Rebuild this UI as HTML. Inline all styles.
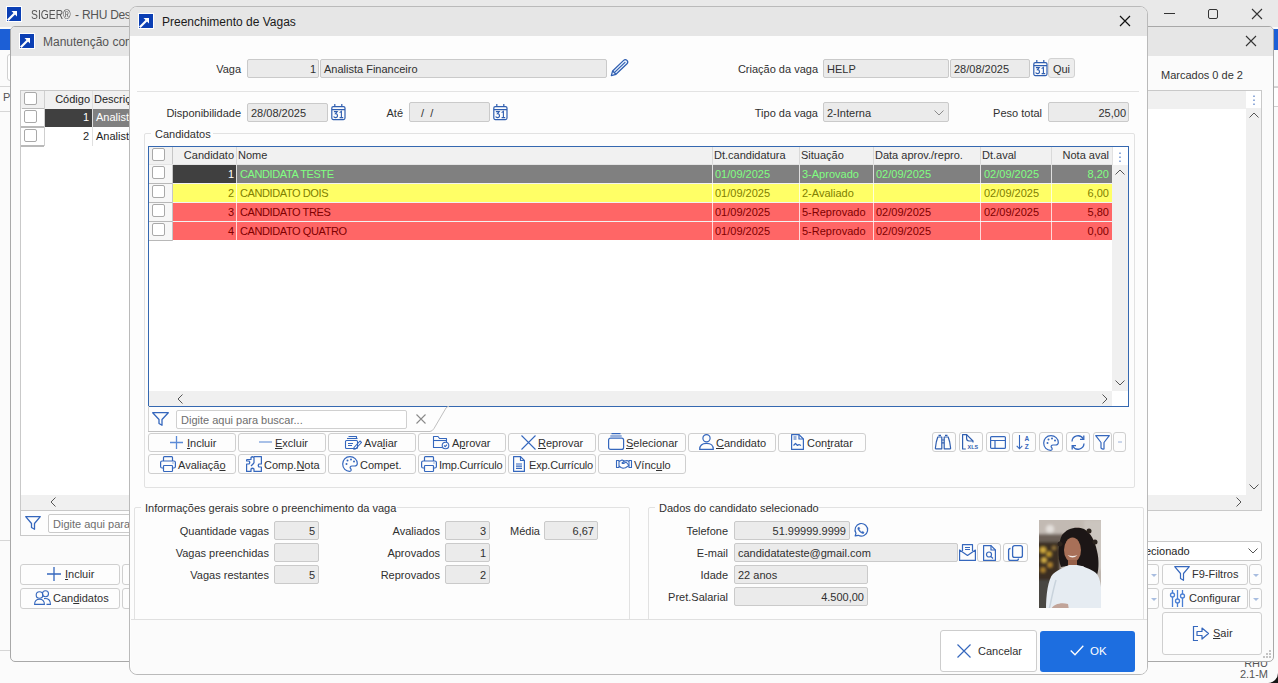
<!DOCTYPE html>
<html><head><meta charset="utf-8">
<style>
*{box-sizing:border-box;margin:0;padding:0}
html,body{width:1278px;height:683px;overflow:hidden;background:#f0f0f0;font-family:"Liberation Sans",sans-serif;font-size:11px;color:#303030;position:relative}
.a{position:absolute}
.t{position:absolute;white-space:nowrap;line-height:13px;font-size:11px}
.r{text-align:right}
.box{position:absolute;background:#ebebeb;border:1px solid #cacaca;border-radius:2px;font-size:11px;line-height:17px;padding-top:1px;white-space:nowrap;overflow:hidden;color:#303030}
.btn{position:absolute;background:#fdfdfd;border:1px solid #cfcfcf;border-radius:3px;font-size:11px;line-height:17px;white-space:nowrap;color:#303030}
.hl{position:absolute;height:1px}
.vl{position:absolute;width:1px}
.ico{position:absolute}
svg{position:absolute;overflow:visible}
.cb{position:absolute;width:13px;height:13px;border:1px solid #a9a9a9;border-radius:2px;background:#fff}
u{text-decoration:underline;text-underline-offset:1px}
.rw .t,.bt .t{top:0}
.nm{letter-spacing:-0.4px}
</style></head><body>

<!-- ===== MAIN SIGER WINDOW ===== -->
<div class="a" style="left:0;top:0;width:1278px;height:683px;background:#e9e9e9"></div>
<div class="a" style="left:0;top:27px;width:1278px;height:656px;background:#fbfbfb"></div>
<div class="a" style="left:7px;top:7px;width:14px;height:14px;background:#0b3fb4;box-shadow:0 0 0 1px #fff"></div>
<svg style="left:7px;top:7px" width="14" height="14"><path d="M0.8 13.2 L7.5 6.5" stroke="#fff" stroke-width="2.2"/><path d="M4.5 4 H10 V9.5 Z" fill="#fff"/></svg>
<div class="t" style="left:31px;top:9px;font-size:12px;color:#555;transform:scaleX(0.86);transform-origin:0 0">SIGER®</div><div class="t" style="left:75px;top:9px;font-size:12px;color:#555">-</div><div class="t" style="left:82px;top:9px;font-size:12px;color:#555;letter-spacing:-0.3px">RHU Desk</div>
<div class="hl" style="left:1164px;top:13px;width:11px;background:#333"></div>
<div class="a" style="left:1208px;top:9px;width:10px;height:10px;border:1px solid #333;border-radius:2px"></div>
<svg style="left:1252px;top:9px" width="10" height="10"><path d="M0 0 L10 10 M10 0 L0 10" stroke="#333" stroke-width="1.1"/></svg>
<div class="a" style="left:0;top:29px;width:12px;height:21px;background:#1c5fd6"></div>
<div class="a" style="left:1272px;top:29px;width:6px;height:21px;background:#1c5fd6"></div>
<div class="hl" style="left:0;top:86px;width:11px;background:#d6d6d6"></div>
<div class="hl" style="left:0;top:111px;width:11px;background:#d6d6d6"></div>
<div class="t" style="left:3px;top:91px;color:#555">P</div>
<div class="a" style="left:7px;top:54px;width:8px;height:27px;border:1px solid #d0d0d0;border-radius:3px;background:#fff"></div>
<div class="hl" style="left:0;top:540px;width:11px;background:#d6d6d6"></div>
<div class="hl" style="left:0;top:650px;width:11px;background:#d6d6d6"></div>
<div class="hl" style="left:1272px;top:86px;width:6px;background:#d6d6d6"></div>
<div class="a" style="left:1270px;top:87px;width:12px;height:20px;border:1px solid #d0d0d0;border-radius:3px;background:#fff"></div>
<div class="t r" style="left:1230px;top:657px;width:38px;color:#555">RHU</div>
<div class="t r" style="left:1230px;top:668px;width:38px;color:#555">2.1-M</div>

<!-- ===== CHILD WINDOW Manutencao ===== -->
<div class="a" style="left:10px;top:26px;width:1264px;height:636px;border:1px solid #a8a8a8;border-radius:5px;background:#fbfbfb;overflow:hidden">
  <div class="a" style="left:0;top:0;width:1262px;height:29px;background:#e6e6e6"></div>
</div>
<div class="a" style="left:20px;top:34px;width:14px;height:14px;background:#0b3fb4;box-shadow:0 0 0 1px #fff"></div>
<svg style="left:20px;top:34px" width="14" height="14"><path d="M0.8 13.2 L7.5 6.5" stroke="#fff" stroke-width="2.2"/><path d="M4.5 4 H10 V9.5 Z" fill="#fff"/></svg>
<div class="t" style="left:43px;top:36px;font-size:12px;color:#555">Manutenção com</div>
<svg style="left:1246px;top:36px" width="10" height="10"><path d="M0 0 L10 10 M10 0 L0 10" stroke="#333" stroke-width="1.1"/></svg>
<div class="t" style="left:1161px;top:69px;color:#333">Marcados 0 de 2</div>
<!-- grid -->
<div class="a" style="left:20px;top:90px;width:1242px;height:421px;border:1px solid #c9c9c9;background:#fff"></div>
<div class="a" style="left:20px;top:510px;width:121px;height:26px;border:1px solid #c9c9c9;border-top:none;background:#fdfdfd"></div>
<div class="a" style="left:21px;top:91px;width:1225px;height:18px;background:#f0f0f0"></div>
<div class="vl" style="left:44px;top:91px;height:55px;background:#cfcfcf"></div>
<div class="vl" style="left:92px;top:91px;height:55px;background:#e0e0e0"></div>
<div class="cb" style="left:24px;top:92px"></div>
<div class="t r" style="left:44px;top:93px;width:46px;color:#1e1e1e">Código</div>
<div class="t" style="left:94px;top:93px;color:#1e1e1e">Descrição</div>
<div class="hl" style="left:22px;top:108px;width:22px;background:#b9b9b9"></div>
<div class="a" style="left:45px;top:109px;width:47px;height:18px;background:#404040"></div>
<div class="a" style="left:93px;top:109px;width:40px;height:18px;background:#808080"></div>
<div class="t r" style="left:45px;top:111px;width:44px;color:#fff">1</div>
<div class="t" style="left:96px;top:111px;color:#fff">Analista Financeiro</div>
<div class="cb" style="left:24px;top:110px"></div>
<div class="hl" style="left:21px;top:126px;width:23px;height:2px;background:#b9b9b9"></div>
<div class="cb" style="left:24px;top:129px"></div>
<div class="t r" style="left:45px;top:130px;width:44px;color:#1e1e1e">2</div>
<div class="t" style="left:96px;top:130px;color:#1e1e1e">Analista Contábil</div>
<div class="hl" style="left:21px;top:145px;width:23px;height:2px;background:#b9b9b9"></div>
<!-- right scrollbar -->
<div class="a" style="left:1246px;top:108px;width:15px;height:387px;background:#f0f0f0"></div>
<svg style="left:1249px;top:112px" width="10" height="6"><path d="M0.5 5.5 L5 1 L9.5 5.5" stroke="#555" fill="none"/></svg>
<svg style="left:1249px;top:484px" width="10" height="6"><path d="M0.5 0.5 L5 5 L9.5 0.5" stroke="#555" fill="none"/></svg>
<svg style="left:1253px;top:95px" width="2" height="11"><path d="M1 0.5v1.5M1 4.5v1.5M1 8.5v1.5" stroke="#4d78c4" stroke-width="1.2"/></svg>
<div class="a" style="left:21px;top:495px;width:1240px;height:15px;background:#f0f0f0"></div>
<div class="hl" style="left:21px;top:510px;width:1240px;background:#c9c9c9"></div>
<svg style="left:50px;top:497px" width="6" height="10"><path d="M5.5 0.5 L1 5 L5.5 9.5" stroke="#555" fill="none"/></svg>
<svg style="left:1236px;top:497px" width="6" height="10"><path d="M0.5 0.5 L5 5 L0.5 9.5" stroke="#555" fill="none"/></svg>
<svg style="left:25px;top:516px" width="16" height="14"><path d="M0.7 0.7 H15.3 L9.5 7.5 V13.3 L6.5 11.5 V7.5 Z" stroke="#3567bd" stroke-width="1.3" fill="none" stroke-linejoin="round"/></svg>
<div class="box" style="left:48px;top:514px;width:90px;height:19px;background:#fff;color:#6e6e6e;padding-left:4px">Digite aqui para buscar...</div>
<!-- bottom buttons -->
<div class="btn" style="left:20px;top:564px;width:100px;height:21px;line-height:19px;padding-left:44px"><u>I</u>ncluir</div>
<svg style="left:47px;top:567px" width="14" height="14"><path d="M7 0v14M0 7h14" stroke="#3567bd" stroke-width="1.3"/></svg>
<div class="btn" style="left:122px;top:564px;width:20px;height:21px"></div>
<div class="btn" style="left:20px;top:588px;width:100px;height:21px;line-height:19px;padding-left:32px">Can<u>d</u>idatos</div>
<svg style="left:34px;top:590px" width="17" height="15"><g stroke="#3567bd" stroke-width="1.1" fill="none"><circle cx="11.5" cy="3.8" r="3"/><path d="M10 8.6 C14.5 8.3 16.5 10 16.5 14.4 H12.5"/><circle cx="5.5" cy="5" r="3.3"/><path d="M0.6 14.4 C0.6 10.5 2.5 9.3 5.5 9.3 C8.5 9.3 10.4 10.5 10.4 14.4 Z"/></g></svg>
<div class="btn" style="left:122px;top:588px;width:20px;height:21px"></div>
<div class="a" style="left:1140px;top:541px;width:122px;height:20px;border:1px solid #c9c9c9;border-radius:3px;background:#fff"></div>
<div class="t" style="left:1145px;top:545px;color:#1e1e1e">ecionado</div>
<svg style="left:1248px;top:548px" width="10" height="6"><path d="M0.5 0.5 L5 5 L9.5 0.5" stroke="#555" fill="none"/></svg>
<div class="btn" style="left:1145px;top:564px;width:14px;height:21px"></div>
<div class="btn" style="left:1162px;top:564px;width:86px;height:21px;line-height:19px;padding-left:29px">F9-Filtros</div>
<svg style="left:1174px;top:566px" width="16" height="15"><path d="M0.7 0.7 H15.3 L9.5 7.5 V14.3 L6.5 12.5 V7.5 Z" stroke="#3567bd" stroke-width="1.2" fill="none" stroke-linejoin="round"/></svg>
<div class="btn" style="left:1249px;top:564px;width:13px;height:21px"></div>
<div class="btn" style="left:1145px;top:588px;width:14px;height:21px"></div>
<div class="btn" style="left:1162px;top:588px;width:86px;height:21px;line-height:19px;padding-left:26px">Configurar</div>
<svg style="left:1170px;top:590px" width="15" height="17"><g stroke="#4a7fd4" stroke-width="1.3" fill="none"><path d="M2.5 0v17M7.5 0v17M12.5 0v17"/><circle cx="2.5" cy="5" r="2" fill="#fdfdfd"/><circle cx="7.5" cy="11" r="2" fill="#fdfdfd"/><circle cx="12.5" cy="6" r="2" fill="#fdfdfd"/></g></svg>
<div class="btn" style="left:1249px;top:588px;width:13px;height:21px"></div>
<svg style="left:1151px;top:574px" width="6" height="3"><path d="M0 0 H6 L3 3 Z" fill="#a8bde0"/></svg>
<svg style="left:1253px;top:574px" width="6" height="3"><path d="M0 0 H6 L3 3 Z" fill="#a8bde0"/></svg>
<svg style="left:1151px;top:598px" width="6" height="3"><path d="M0 0 H6 L3 3 Z" fill="#a8bde0"/></svg>
<svg style="left:1253px;top:598px" width="6" height="3"><path d="M0 0 H6 L3 3 Z" fill="#a8bde0"/></svg>
<div class="btn" style="left:1162px;top:612px;width:100px;height:43px;line-height:41px;padding-left:50px"><u>S</u>air</div>
<svg style="left:1192px;top:626px" width="18" height="15"><path d="M6 0.5 H1.5 V14.5 H6" stroke="#3567bd" fill="none" stroke-width="1.2"/><path d="M5 5.5 H10 V2 L16.5 7.5 L10 13 V9.5 H5 Z" stroke="#3567bd" fill="none" stroke-width="1.2" stroke-linejoin="round"/></svg>

<!-- DIALOG placeholder -->
<svg style="left:1263px;top:650px" width="9" height="9"><g fill="#c4c4c4"><rect x="6" y="0" width="2" height="2"/><rect x="3" y="3" width="2" height="2"/><rect x="6" y="3" width="2" height="2"/><rect x="0" y="6" width="2" height="2"/><rect x="3" y="6" width="2" height="2"/><rect x="6" y="6" width="2" height="2"/></g></svg>
<svg style="left:1268px;top:673px" width="10" height="10"><path d="M10 0 V10 H0 A10 10 0 0 0 10 0 Z" fill="#151515"/></svg>
<!--DIALOG START-->
<!-- ===== DIALOG Preenchimento de Vagas ===== -->
<div class="a" style="left:129px;top:6px;width:1019px;height:669px;border:1px solid #bababa;border-radius:8px;background:#fdfdfd;overflow:hidden">
  <div class="a" style="left:0;top:0;width:1017px;height:29px;background:#e6e6e6"></div>
</div>
<div class="a" style="left:139px;top:14px;width:14px;height:14px;background:#0b3fb4;box-shadow:0 0 0 1px #fff"></div>
<svg style="left:139px;top:14px" width="14" height="14"><path d="M0.8 13.2 L7.5 6.5" stroke="#fff" stroke-width="2.2"/><path d="M4.5 4 H10 V9.5 Z" fill="#fff"/></svg>
<div class="t" style="left:162px;top:16px;font-size:12px;color:#1a1a1a">Preenchimento de Vagas</div>
<svg style="left:1120px;top:16px" width="10" height="10"><path d="M0 0 L10 10 M10 0 L0 10" stroke="#111" stroke-width="1.2"/></svg>

<!-- row Vaga -->
<div class="t r" style="left:180px;top:63px;width:61px">Vaga</div>
<div class="box r" style="left:247px;top:59px;width:72px;height:19px;padding-right:2px">1</div>
<div class="box" style="left:320px;top:59px;width:287px;height:19px;padding-left:3px">Analista Financeiro</div>
<svg style="left:610px;top:59px" width="19" height="18"><g stroke="#2f5eb0" stroke-width="1.2" fill="none" stroke-linejoin="round"><path d="M1.3 16.6 L2.6 12 L13.6 1.4 Q15.3 -0.2 17 1.4 Q18.6 3.1 17 4.8 L6 15.3 Z" fill="#eaf3ff"/><path d="M4.3 13.6 L15.3 3.1"/><path d="M2.6 12 L6 15.3"/></g></svg>
<div class="t r" style="left:700px;top:63px;width:118px">Criação da vaga</div>
<div class="box" style="left:823px;top:59px;width:126px;height:19px;padding-left:3px">HELP</div>
<div class="box" style="left:950px;top:59px;width:80px;height:19px;padding-left:3px">28/08/2025</div>
<svg style="left:1033px;top:60px" width="15" height="16"><g stroke="#2f5eb0" stroke-width="1.2" fill="none"><rect x="0.8" y="2.6" width="13.2" height="13" rx="1.5"/><path d="M0.8 5.6 H14 M3.8 0 V2.6 M10.8 0 V2.6"/><path d="M2.9 7.6 H6.2 L4.4 9.8 Q6.5 9.8 6.5 11.7 Q6.5 13.6 4.5 13.6 Q3.1 13.6 2.6 12.6" stroke-width="1.1"/><path d="M8.6 8.6 L10.4 7.4 V13.6 M8.6 13.6 H12.2" stroke-width="1.1"/></g></svg>
<div class="btn" style="left:1048px;top:58px;width:27px;height:20px;text-align:center;background:#ededed;border-color:#d2d2d2;padding-top:2px">Qui</div>
<div class="hl" style="left:137px;top:91px;width:1002px;background:#e3e3e3"></div>

<!-- row Disponibilidade -->
<div class="t r" style="left:150px;top:107px;width:91px">Disponibilidade</div>
<div class="box" style="left:247px;top:103px;width:81px;height:19px;padding-left:3px">28/08/2025</div>
<svg style="left:331px;top:104px" width="15" height="16"><g stroke="#2f5eb0" stroke-width="1.2" fill="none"><rect x="0.8" y="2.6" width="13.2" height="13" rx="1.5"/><path d="M0.8 5.6 H14 M3.8 0 V2.6 M10.8 0 V2.6"/><path d="M2.9 7.6 H6.2 L4.4 9.8 Q6.5 9.8 6.5 11.7 Q6.5 13.6 4.5 13.6 Q3.1 13.6 2.6 12.6" stroke-width="1.1"/><path d="M8.6 8.6 L10.4 7.4 V13.6 M8.6 13.6 H12.2" stroke-width="1.1"/></g></svg>
<div class="t r" style="left:370px;top:107px;width:33px">Até</div>
<div class="box" style="left:409px;top:102px;width:81px;height:20px;padding-left:8px;line-height:18px">&nbsp;/ &nbsp;/</div>
<svg style="left:493px;top:104px" width="15" height="16"><g stroke="#2f5eb0" stroke-width="1.2" fill="none"><rect x="0.8" y="2.6" width="13.2" height="13" rx="1.5"/><path d="M0.8 5.6 H14 M3.8 0 V2.6 M10.8 0 V2.6"/><path d="M2.9 7.6 H6.2 L4.4 9.8 Q6.5 9.8 6.5 11.7 Q6.5 13.6 4.5 13.6 Q3.1 13.6 2.6 12.6" stroke-width="1.1"/><path d="M8.6 8.6 L10.4 7.4 V13.6 M8.6 13.6 H12.2" stroke-width="1.1"/></g></svg>
<div class="t r" style="left:700px;top:107px;width:118px">Tipo da vaga</div>
<div class="box" style="left:823px;top:102px;width:126px;height:20px;padding-left:3px;padding-top:2px">2-Interna</div>
<svg style="left:934px;top:110px" width="10" height="6"><path d="M0.5 0.5 L5 5 L9.5 0.5" stroke="#8a8a8a" fill="none"/></svg>
<div class="t r" style="left:960px;top:107px;width:82px">Peso total</div>
<div class="box r" style="left:1048px;top:102px;width:81px;height:20px;padding-right:2px;line-height:18px">25,00</div>

<!-- Candidatos group -->
<div class="a" style="left:144px;top:133px;width:991px;height:355px;border:1px solid #e2e2e2;border-radius:2px"></div>
<div class="a" style="left:151px;top:127px;width:62px;height:12px;background:#fdfdfd"></div>
<div class="t" style="left:155px;top:128px">Candidatos</div>
<!-- grid -->
<div class="a" style="left:148px;top:146px;width:981px;height:261px;border:1px solid #3568b0;background:#fff"></div>
<div class="a" style="left:149px;top:147px;width:963px;height:18px;background:#f1f1f1"></div>
<div class="a" style="left:1112px;top:147px;width:16px;height:18px;background:#fff"></div>
<div class="a" style="left:149px;top:165px;width:23px;height:76px;background:#f7f7f7"></div>
<div class="vl" style="left:172px;top:147px;height:94px;background:#c6c6c6"></div>
<div class="vl" style="left:236px;top:147px;height:18px;background:#d9d9d9"></div>
<div class="vl" style="left:712px;top:147px;height:18px;background:#d9d9d9"></div>
<div class="vl" style="left:799px;top:147px;height:18px;background:#d9d9d9"></div>
<div class="vl" style="left:873px;top:147px;height:18px;background:#d9d9d9"></div>
<div class="vl" style="left:980px;top:147px;height:18px;background:#d9d9d9"></div>
<div class="vl" style="left:1051px;top:147px;height:18px;background:#d9d9d9"></div>
<div class="hl" style="left:149px;top:164px;width:963px;background:#e4e4e4"></div>
<div class="cb" style="left:152px;top:148px"></div>
<div class="t r" style="left:173px;top:149px;width:61px">Candidato</div>
<div class="t" style="left:238px;top:149px">Nome</div>
<div class="t" style="left:714px;top:149px">Dt.candidatura</div>
<div class="t" style="left:801px;top:149px">Situação</div>
<div class="t" style="left:875px;top:149px">Data aprov./repro.</div>
<div class="t" style="left:982px;top:149px">Dt.aval</div>
<div class="t r" style="left:1052px;top:149px;width:57px">Nota aval</div>
<svg style="left:1119px;top:152px" width="2" height="11"><path d="M1 0.5v1.5M1 4.5v1.5M1 8.5v1.5" stroke="#4d78c4" stroke-width="1.2"/></svg>
<div class="vl" style="left:1112px;top:147px;height:18px;background:#e2e2e2"></div>
<!-- rows -->
<div class="a" style="left:173px;top:165px;width:939px;height:18px;background:#808080"></div>
<div class="a" style="left:173px;top:165px;width:63px;height:18px;background:#404040"></div>
<div class="a" style="left:173px;top:184px;width:939px;height:18px;background:#ffff66"></div>
<div class="a" style="left:173px;top:203px;width:939px;height:18px;background:#ff6666"></div>
<div class="a" style="left:173px;top:222px;width:939px;height:18px;background:#ff6666"></div>
<div class="hl" style="left:173px;top:183px;width:939px;background:#f2f2f2"></div>
<div class="hl" style="left:173px;top:202px;width:939px;background:#f2f2f2"></div>
<div class="hl" style="left:173px;top:221px;width:939px;background:#f2f2f2"></div>
<div class="hl" style="left:149px;top:183px;width:23px;background:#b8b8b8"></div>
<div class="hl" style="left:149px;top:202px;width:23px;background:#b8b8b8"></div>
<div class="hl" style="left:149px;top:221px;width:23px;background:#b8b8b8"></div>
<div class="hl" style="left:149px;top:240px;width:23px;background:#b8b8b8"></div>
<div class="vl" style="left:236px;top:165px;height:75px;background:rgba(255,255,255,0.75)"></div>
<div class="vl" style="left:712px;top:165px;height:75px;background:rgba(255,255,255,0.75)"></div>
<div class="vl" style="left:799px;top:165px;height:75px;background:rgba(255,255,255,0.75)"></div>
<div class="vl" style="left:873px;top:165px;height:75px;background:rgba(255,255,255,0.75)"></div>
<div class="vl" style="left:980px;top:165px;height:75px;background:rgba(255,255,255,0.75)"></div>
<div class="vl" style="left:1051px;top:165px;height:75px;background:rgba(255,255,255,0.75)"></div>
<div class="cb" style="left:152px;top:166px"></div>
<div class="cb" style="left:152px;top:185px"></div>
<div class="cb" style="left:152px;top:204px"></div>
<div class="cb" style="left:152px;top:223px"></div>
<div class="rw" style="position:absolute;left:0;top:168px;color:#80ff80">
 <div class="t r" style="left:173px;width:61px;color:#fff">1</div>
 <div class="t nm" style="left:240px">CANDIDATA TESTE</div>
 <div class="t" style="left:715px">01/09/2025</div>
 <div class="t" style="left:802px">3-Aprovado</div>
 <div class="t" style="left:876px">02/09/2025</div>
 <div class="t" style="left:984px">02/09/2025</div>
 <div class="t r" style="left:1052px;width:57px">8,20</div>
</div>
<div class="rw" style="position:absolute;left:0;top:187px;color:#808000">
 <div class="t r" style="left:173px;width:61px">2</div>
 <div class="t nm" style="left:240px">CANDIDATO DOIS</div>
 <div class="t" style="left:715px">01/09/2025</div>
 <div class="t" style="left:802px">2-Avaliado</div>
 <div class="t" style="left:984px">02/09/2025</div>
 <div class="t r" style="left:1052px;width:57px">6,00</div>
</div>
<div class="rw" style="position:absolute;left:0;top:206px;color:#800000">
 <div class="t r" style="left:173px;width:61px">3</div>
 <div class="t nm" style="left:240px">CANDIDATO TRES</div>
 <div class="t" style="left:715px">01/09/2025</div>
 <div class="t" style="left:802px">5-Reprovado</div>
 <div class="t" style="left:876px">02/09/2025</div>
 <div class="t" style="left:984px">02/09/2025</div>
 <div class="t r" style="left:1052px;width:57px">5,80</div>
</div>
<div class="rw" style="position:absolute;left:0;top:225px;color:#800000">
 <div class="t r" style="left:173px;width:61px">4</div>
 <div class="t nm" style="left:240px">CANDIDATO QUATRO</div>
 <div class="t" style="left:715px">01/09/2025</div>
 <div class="t" style="left:802px">5-Reprovado</div>
 <div class="t" style="left:876px">02/09/2025</div>
 <div class="t r" style="left:1052px;width:57px">0,00</div>
</div>
<!-- scrollbars -->
<div class="a" style="left:1112px;top:165px;width:16px;height:226px;background:#f0f0f0"></div>
<svg style="left:1115px;top:169px" width="10" height="6"><path d="M0.5 5.5 L5 1 L9.5 5.5" stroke="#555" fill="none"/></svg>
<svg style="left:1115px;top:380px" width="10" height="6"><path d="M0.5 0.5 L5 5 L9.5 0.5" stroke="#555" fill="none"/></svg>
<div class="a" style="left:149px;top:391px;width:963px;height:15px;background:#f0f0f0"></div>
<svg style="left:177px;top:394px" width="6" height="10"><path d="M5.5 0.5 L1 5 L5.5 9.5" stroke="#555" fill="none"/></svg>
<svg style="left:1102px;top:394px" width="6" height="10"><path d="M0.5 0.5 L5 5 L0.5 9.5" stroke="#555" fill="none"/></svg>
<!-- filter row -->
<svg style="left:152px;top:412px" width="17" height="14"><path d="M0.7 0.7 H16.3 L10 7.5 V13.3 L7 11.5 V7.5 Z" stroke="#3567bd" stroke-width="1.3" fill="none" stroke-linejoin="round"/></svg>
<div class="box" style="left:176px;top:410px;width:231px;height:19px;background:#fff;color:#6e6e6e;padding-left:4px;border-color:#d0d0d0">Digite aqui para buscar...</div>
<svg style="left:416px;top:414px" width="10" height="10"><path d="M0.5 0.5 L9.5 9.5 M9.5 0.5 L0.5 9.5" stroke="#8a8a8a" stroke-width="1.1"/></svg>
<div class="vl" style="left:148px;top:406px;height:26px;background:#d4d4d4"></div>
<svg style="left:147px;top:403px" width="300" height="30"><path d="M1 28.5 H283 Q285 28.5 287 25.5 L299 5 Q300 3.5 302 3.5" stroke="#c0c0c0" fill="none"/></svg>
<!-- button rows -->
<div class="btn" style="left:148px;top:433px;width:88px;height:19px"></div>
<div class="btn" style="left:238px;top:433px;width:88px;height:19px"></div>
<div class="btn" style="left:328px;top:433px;width:88px;height:19px"></div>
<div class="btn" style="left:418px;top:433px;width:88px;height:19px"></div>
<div class="btn" style="left:508px;top:433px;width:88px;height:19px"></div>
<div class="btn" style="left:598px;top:433px;width:88px;height:19px"></div>
<div class="btn" style="left:688px;top:433px;width:88px;height:19px"></div>
<div class="btn" style="left:778px;top:433px;width:88px;height:19px"></div>
<div class="btn" style="left:148px;top:454px;width:88px;height:20px"></div>
<div class="btn" style="left:238px;top:454px;width:88px;height:20px"></div>
<div class="btn" style="left:328px;top:454px;width:88px;height:20px"></div>
<div class="btn" style="left:418px;top:454px;width:88px;height:20px"></div>
<div class="btn" style="left:508px;top:454px;width:88px;height:20px"></div>
<div class="btn" style="left:598px;top:454px;width:88px;height:20px"></div>
<div class="bt" style="position:absolute;left:0;top:437px">
 <div class="t" style="left:187px"><u>I</u>ncluir</div>
 <div class="t" style="left:275px"><u>E</u>xcluir</div>
 <div class="t" style="left:364px">Ava<u>l</u>iar</div>
 <div class="t" style="left:452px">A<u>p</u>rovar</div>
 <div class="t" style="left:538px"><u>R</u>eprovar</div>
 <div class="t" style="left:626px"><u>S</u>elecionar</div>
 <div class="t" style="left:716px"><u>C</u>andidato</div>
 <div class="t" style="left:807px">Con<u>t</u>ratar</div>
</div>
<div class="bt" style="position:absolute;left:0;top:459px">
 <div class="t" style="left:178px">Avaliaçã<u>o</u></div>
 <div class="t" style="left:264px">Comp.<u>N</u>ota</div>
 <div class="t" style="left:360px">Compet.</div>
 <div class="t" style="left:439px;letter-spacing:-0.2px">Imp.Currículo</div>
 <div class="t" style="left:529px;letter-spacing:-0.2px">Exp.Currículo</div>
 <div class="t" style="left:634px">Vínc<u>u</u>lo</div>
</div>
<!-- icons row1 -->
<svg style="left:170px;top:436px" width="13" height="13"><path d="M6.5 0v13M0 6.5h13" stroke="#5b8ad6" stroke-width="1.3"/></svg>
<svg style="left:259px;top:436px" width="13" height="13"><path d="M0 6h13" stroke="#7a9fdc" stroke-width="1.3"/></svg>
<svg style="left:345px;top:436px" width="17" height="13"><g stroke="#3567bd" stroke-width="1.1" fill="none" stroke-linejoin="round"><path d="M3.5 0.5 H11.5 V3"/><path d="M2 2.5 H12.5"/><rect x="0.5" y="4.5" width="12" height="8" rx="1"/><path d="M3 7.5h5M3 9.5h4"/><path d="M9 11.5 L15 5 L16.5 6.5 L10.5 13 L8.7 13.2 Z"/></g></svg>
<svg style="left:433px;top:436px" width="17" height="13"><g stroke="#3567bd" stroke-width="1.1" fill="none" stroke-linejoin="round"><path d="M9 11.5 H0.5 V0.5 H5 L6.5 2.5 H13.5 V6"/><path d="M0.5 4.5 H13.5"/><circle cx="12.5" cy="9.5" r="3.3"/><path d="M11 9.5 L12.2 10.7 L14 8.6"/></g></svg>
<svg style="left:521px;top:435px" width="15" height="15"><path d="M0.5 0.5 L14.5 14.5 M14.5 0.5 L0.5 14.5" stroke="#3567bd" stroke-width="1.1"/></svg>
<svg style="left:608px;top:433px" width="17" height="17"><g stroke="#3567bd" stroke-width="1.2" fill="none"><rect x="0.6" y="5.2" width="15" height="11.2" rx="2"/><path d="M3.5 0.6h9M2.3 3h11.4"/></g></svg>
<svg style="left:699px;top:434px" width="15" height="16"><g stroke="#3567bd" stroke-width="1.2" fill="none"><circle cx="7.5" cy="4.2" r="3.6"/><path d="M0.7 15.4 C0.7 10.5 3.5 9.3 7.5 9.3 C11.5 9.3 14.3 10.5 14.3 15.4 Z"/></g></svg>
<svg style="left:791px;top:434px" width="13" height="16"><g stroke="#3567bd" stroke-width="1.2" fill="none" stroke-linejoin="round"><path d="M0.6 0.6 H8 L12.4 5 V15.4 H0.6 Z"/><path d="M8 0.6 V5 H12.4"/><path d="M2.5 3h3M2.5 5h3M2.5 11.5 L4.5 9.5 L6.5 11.5 L8 10.5 L10 11.5"/></g></svg>
<!-- icons row2 -->
<svg style="left:160px;top:456px" width="16" height="16"><g stroke="#3567bd" stroke-width="1.2" fill="none" stroke-linejoin="round"><path d="M3.5 5 V1.5 Q3.5 0.6 4.4 0.6 H11.6 Q12.5 0.6 12.5 1.5 V5"/><rect x="0.6" y="5" width="14.8" height="7" rx="1.5"/><rect x="3.5" y="9.5" width="9" height="6" rx="0.8" fill="#fdfdfd"/><path d="M12.5 7h1"/></g></svg>
<svg style="left:246px;top:456px" width="16" height="16"><g stroke="#3567bd" stroke-width="1.2" fill="none" stroke-linejoin="round"><path d="M0.6 3.5 H5 V1.5 Q6.5 0 8 1.5 V3.5 H8 V7"/><path d="M8 0.6 H15.4 V8 H13 Q11.5 9.5 13 11 H15.4 V15.4 H8 V13 Q6.5 11.5 5 13 V15.4 H0.6 V8 H3 Q4.5 6.5 3 5 H0.6 V3.5"/><path d="M8 7 L5 10"/></g></svg>
<svg style="left:342px;top:456px" width="16" height="16"><g stroke="#3567bd" stroke-width="1.2" fill="none"><path d="M8 0.7 C3.5 0.7 0.7 4 0.7 8 C0.7 12.5 4 15.3 7.5 15.3 C9.5 15.3 9.5 13.5 8.5 12.5 C7.5 11.3 8.5 10 10 10 H12.5 C14.5 10 15.3 9 15.3 7.5 C15.3 3.5 12 0.7 8 0.7 Z"/></g><g fill="#3567bd"><circle cx="4.5" cy="8" r="1"/><circle cx="5.5" cy="4.5" r="1"/><circle cx="9" cy="3.5" r="1"/><circle cx="12" cy="5.5" r="1"/></g></svg>
<svg style="left:421px;top:456px" width="16" height="16"><g stroke="#3567bd" stroke-width="1.2" fill="none" stroke-linejoin="round"><path d="M3.5 5 V1.5 Q3.5 0.6 4.4 0.6 H11.6 Q12.5 0.6 12.5 1.5 V5"/><rect x="0.6" y="5" width="14.8" height="7" rx="1.5"/><rect x="3.5" y="9.5" width="9" height="6" rx="0.8" fill="#fdfdfd"/><path d="M12.5 7h1"/></g></svg>
<svg style="left:513px;top:456px" width="12" height="16"><g stroke="#3567bd" stroke-width="1.2" fill="none" stroke-linejoin="round"><path d="M0.6 0.6 H7.5 L11.4 4.5 V15.4 H0.6 Z"/><path d="M7.5 0.6 V4.5 H11.4"/><path d="M3 8h6M3 10.2h6M3 12.4h6"/></g></svg>
<svg style="left:616px;top:459px" width="16" height="10"><g stroke="#3567bd" stroke-width="1.1" fill="none" stroke-linejoin="round"><path d="M0.5 1.5 H3 V8.5 H0.5 Z M15.5 1.5 H13 V8.5 H15.5 Z"/><path d="M3 2.5 L6 1 L8.5 2 L6 4 Q7 5 8.5 4 L10 3 L13 6.5"/><path d="M3 7 L5 8.5 L7 9.2 L9.5 8.7 L13 6.5 M13 2.5 L11 1.5 L8.5 2"/></g></svg>
<!-- icon buttons -->
<div class="btn" style="left:932px;top:432px;width:24px;height:20px"></div>
<div class="btn" style="left:959px;top:432px;width:24px;height:20px"></div>
<div class="btn" style="left:986px;top:432px;width:24px;height:20px"></div>
<div class="btn" style="left:1012px;top:432px;width:24px;height:20px"></div>
<div class="btn" style="left:1039px;top:432px;width:24px;height:20px"></div>
<div class="btn" style="left:1066px;top:432px;width:24px;height:20px"></div>
<div class="btn" style="left:1093px;top:432px;width:19px;height:20px"></div>
<div class="btn" style="left:1113px;top:432px;width:13px;height:20px"></div>
<svg style="left:1118px;top:441px" width="4" height="2"><path d="M0 1h4" stroke="#9ab0d8"/></svg>
<svg style="left:935px;top:435px" width="17" height="15"><g stroke="#2f5eb0" stroke-width="1.2" fill="none" stroke-linejoin="round"><path d="M2.8 2 H6.8 V13.8 H0.9 Q0.3 13.8 0.4 13 L1.3 7 Z"/><path d="M9.2 2 H13.2 L14.7 7 L15.6 13 Q15.7 13.8 15.1 13.8 H9.2 Z"/><path d="M6.8 5 H9.2 M6.8 7.8 H9.2"/><path d="M3.5 0.4 H6 M10 0.4 H12.5"/></g></svg>
<svg style="left:962px;top:434px" width="17" height="16"><g stroke="#2f5eb0" stroke-width="1.2" fill="none" stroke-linejoin="round"><path d="M3.8 15 H0.6 V0.6 H4.6 L11 7 V8.4"/><path d="M4.6 0.6 V4.6 Q4.6 7 7 7 H11"/></g><text x="5.6" y="15.3" font-size="6.2" font-weight="bold" fill="#2f5eb0" font-family="Liberation Sans" textLength="10.5" lengthAdjust="spacingAndGlyphs">XLS</text></svg>
<svg style="left:990px;top:436px" width="16" height="13"><g stroke="#3567bd" stroke-width="1.2" fill="none"><rect x="0.6" y="0.6" width="14.8" height="11.8" rx="1"/><path d="M0.6 4.5 H15.4 M5 4.5 V12.4"/></g></svg>
<svg style="left:1016px;top:434px" width="16" height="16"><g stroke="#3567bd" stroke-width="1.1" fill="none"><path d="M3.5 1 V14.5 M0.7 11.8 L3.5 14.8 L6.3 11.8"/></g><text x="8.5" y="7" font-size="6.5" font-weight="bold" fill="#3567bd" font-family="Liberation Sans">A</text><text x="8.8" y="14.8" font-size="6.5" font-weight="bold" fill="#3567bd" font-family="Liberation Sans">Z</text></svg>
<svg style="left:1043px;top:435px" width="16" height="16"><g stroke="#3567bd" stroke-width="1.2" fill="none"><path d="M8 0.7 C3.5 0.7 0.7 4 0.7 8 C0.7 12.5 4 15.3 7.5 15.3 C9.5 15.3 9.5 13.5 8.5 12.5 C7.5 11.3 8.5 10 10 10 H12.5 C14.5 10 15.3 9 15.3 7.5 C15.3 3.5 12 0.7 8 0.7 Z"/></g><g fill="#3567bd"><circle cx="4.5" cy="8" r="1"/><circle cx="5.5" cy="4.5" r="1"/><circle cx="9" cy="3.5" r="1"/><circle cx="12" cy="5.5" r="1"/></g></svg>
<svg style="left:1070px;top:435px" width="16" height="15"><g stroke="#3567bd" stroke-width="1.3" fill="none"><path d="M2 6.5 A6 6 0 0 1 13.3 4"/><path d="M14 8.5 A6 6 0 0 1 2.7 11"/><path d="M13.8 0.5 V4.3 H10"/><path d="M2.2 14.5 V10.7 H6"/></g></svg>
<svg style="left:1095px;top:435px" width="15" height="15"><path d="M0.7 0.7 H14.3 L9 7.5 V14 Q7.5 14.5 6 13 V7.5 Z" stroke="#3567bd" stroke-width="1.2" fill="none" stroke-linejoin="round"/></svg>
<!-- Info group -->
<div class="a" style="left:134px;top:507px;width:496px;height:121px;border:1px solid #e2e2e2;border-radius:2px"></div>
<div class="a" style="left:141px;top:502px;width:256px;height:12px;background:#fdfdfd"></div>
<div class="t" style="left:145px;top:502px">Informações gerais sobre o preenchimento da vaga</div>
<div class="t r" style="left:150px;top:525px;width:119px">Quantidade vagas</div>
<div class="t r" style="left:150px;top:547px;width:119px">Vagas preenchidas</div>
<div class="t r" style="left:150px;top:569px;width:119px">Vagas restantes</div>
<div class="box r" style="left:274px;top:521px;width:45px;height:19px;padding-top:1px;padding-right:3px">5</div>
<div class="box r" style="left:274px;top:543px;width:45px;height:19px;padding-top:1px;padding-right:3px"></div>
<div class="box r" style="left:274px;top:565px;width:45px;height:19px;padding-top:1px;padding-right:3px">5</div>
<div class="t r" style="left:340px;top:525px;width:100px">Avaliados</div>
<div class="t r" style="left:340px;top:547px;width:100px">Aprovados</div>
<div class="t r" style="left:340px;top:569px;width:100px">Reprovados</div>
<div class="box r" style="left:445px;top:521px;width:45px;height:19px;padding-top:1px;padding-right:3px">3</div>
<div class="box r" style="left:445px;top:543px;width:45px;height:19px;padding-top:1px;padding-right:3px">1</div>
<div class="box r" style="left:445px;top:565px;width:45px;height:19px;padding-top:1px;padding-right:3px">2</div>
<div class="t" style="left:510px;top:525px">Média</div>
<div class="box r" style="left:544px;top:521px;width:54px;height:19px;padding-top:1px;padding-right:3px">6,67</div>
<!-- Dados group -->
<div class="a" style="left:648px;top:507px;width:496px;height:121px;border:1px solid #e2e2e2;border-radius:2px"></div>
<div class="a" style="left:655px;top:502px;width:162px;height:12px;background:#fdfdfd"></div>
<div class="t" style="left:659px;top:502px">Dados do candidato selecionado</div>
<div class="t r" style="left:640px;top:525px;width:88px">Telefone</div>
<div class="t r" style="left:640px;top:547px;width:88px">E-mail</div>
<div class="t r" style="left:640px;top:569px;width:88px">Idade</div>
<div class="t r" style="left:640px;top:591px;width:88px">Pret.Salarial</div>
<div class="box r" style="left:734px;top:521px;width:116px;height:19px;padding-top:1px;padding-right:3px">51.99999.9999</div>
<div class="box" style="left:734px;top:543px;width:224px;height:19px;padding-top:1px;padding-left:3px">candidatateste@gmail.com</div>
<div class="box" style="left:734px;top:565px;width:134px;height:19px;padding-top:1px;padding-left:3px">22 anos</div>
<div class="box r" style="left:734px;top:587px;width:134px;height:19px;padding-top:1px;padding-right:3px">4.500,00</div>
<svg style="left:853px;top:523px" width="15" height="15"><g stroke="#3567bd" stroke-width="1.2" fill="none" stroke-linejoin="round"><path d="M2.2 12.8 L3 10.2 A6.3 6.3 0 1 1 5.2 12.3 Z"/><path d="M5 4.5 Q4.5 5 5 6.5 Q6.5 9.5 9.5 10.5 Q10.5 10.8 11 10 L10.8 9 L9.3 8.4 L8.6 9 Q7 8.2 6.2 6.6 L6.8 5.8 L6.2 4.3 Z" fill="#3567bd" stroke-width="0.5"/></g></svg>
<svg style="left:959px;top:544px" width="17" height="17"><g stroke="#3567bd" stroke-width="1.2" fill="none" stroke-linejoin="round"><path d="M3.5 7 V0.6 H13.5 V7"/><path d="M0.6 6 V16.4 H16.4 V6 L8.5 11.5 Z"/><path d="M6 3.5h5M6 5.5h5"/></g></svg>
<div class="btn" style="left:977px;top:543px;width:24px;height:19px"></div>
<svg style="left:983px;top:545px" width="13" height="16"><g stroke="#3567bd" stroke-width="1.2" fill="none" stroke-linejoin="round"><path d="M0.6 0.6 H8 L12.4 5 V15.4 H0.6 Z"/><path d="M8 0.6 V5 H12.4"/><circle cx="6" cy="9.5" r="2.5"/><path d="M7.8 11.3 L10 13.5"/></g></svg>
<div class="btn" style="left:1003px;top:543px;width:25px;height:19px"></div>
<svg style="left:1008px;top:545px" width="15" height="16"><g stroke="#3567bd" stroke-width="1.3" fill="none" stroke-linejoin="round"><rect x="4.6" y="0.6" width="9.8" height="11.8" rx="2"/><path d="M2.5 3.5 Q0.6 3.5 0.6 5.5 V13.5 Q0.6 15.4 2.5 15.4 H8.5 Q10.5 15.4 10.5 13.5"/></g></svg>
<!-- photo -->
<svg style="left:1039px;top:520px" width="62" height="88" viewBox="0 0 62 88">
 <defs>
  <filter id="bl" x="-20%" y="-20%" width="140%" height="140%"><feGaussianBlur stdDeviation="1.6"/></filter>
  <filter id="bl2"><feGaussianBlur stdDeviation="0.7"/></filter>
  <clipPath id="pc"><rect width="62" height="88"/></clipPath>
 </defs>
 <g clip-path="url(#pc)">
 <rect width="62" height="88" fill="#bdb5ae"/>
 <g filter="url(#bl)">
  <rect x="-5" y="-5" width="72" height="20" fill="#c2bab3"/>
  <rect x="-5" y="14" width="30" height="8" fill="#6c6058"/>
  <rect x="-5" y="22" width="26" height="40" fill="#3a2e20"/>
  <rect x="-5" y="60" width="20" height="35" fill="#4a4642"/>
  <circle cx="4" cy="30" r="3" fill="#d8b040"/><circle cx="10" cy="34" r="2.6" fill="#c9a030"/><circle cx="5" cy="40" r="2.6" fill="#e0b848"/><circle cx="11" cy="45" r="2.4" fill="#c09030"/><circle cx="4" cy="50" r="2.4" fill="#b88a30"/><circle cx="15" cy="28" r="2" fill="#a08040"/>
  <rect x="45" y="0" width="22" height="50" fill="#cbc5bf"/>
  <circle cx="11" cy="9" r="4" fill="#e4e0dc"/>
 </g>
 <g filter="url(#bl2)">
  <path d="M22 47 C18 37 19 23 23 15 C28 8 38 6 45 9 C52 13 56 21 58 31 C60 39 60 49 58 55 C53 54 48 50 44 46 L28 46 Z" fill="#1e1714"/><circle cx="21" cy="24" r="2.5" fill="#2a201c"/><circle cx="56" cy="22" r="2.5" fill="#2a201c"/><circle cx="50" cy="11" r="2.5" fill="#2a201c"/>
  <ellipse cx="33.5" cy="30" rx="8.5" ry="12.5" fill="#a87058"/>
  <path d="M28.5 35 Q33.5 40 38.5 35 Q33.5 37 28.5 35 Z" fill="#f2ebe6"/>
  <rect x="29" y="40" width="9" height="7" fill="#96604a"/>
  <path d="M7 90 C7 75 9 59 14 54 C20 49 26 47 30 45 L38 45 C44 46 52 49 57 53 C62 58 63 70 63 90 Z" fill="#e6ecf2"/>
  <path d="M10 90 C12 82 14 70 17 60" stroke="#c9d3dc" stroke-width="1.5" fill="none"/>
  <path d="M12 89 C15 84 22 82 29 84 L30 90 L11 90 Z" fill="#b89282" opacity="0.8"/>
 </g>
 </g>
</svg>
<!-- bottom separator and buttons -->
<div class="hl" style="left:131px;top:619px;width:1016px;background:#e0e0e0"></div>
<div class="a" style="left:131px;top:620px;width:1016px;height:54px;background:#fbfbfb;border-radius:0 0 7px 7px"></div>
<div class="btn" style="left:940px;top:630px;width:97px;height:42px;border-color:#cdcdcd;background:#fff"></div>
<svg style="left:957px;top:644px" width="14" height="14"><path d="M0.5 0.5 L13.5 13.5 M13.5 0.5 L0.5 13.5" stroke="#3567bd" stroke-width="1.2"/></svg>
<div class="t" style="left:978px;top:645px;font-size:11px">Cancelar</div>
<div class="a" style="left:1040px;top:631px;width:95px;height:41px;background:#1d6ee0;border-radius:3px"></div>
<svg style="left:1070px;top:645px" width="14" height="11"><path d="M0.7 5.5 L5 9.8 L13.3 0.8" stroke="#fff" stroke-width="1.3" fill="none"/></svg>
<div class="t" style="left:1090px;top:645px;font-size:11.5px;color:#fff">OK</div>




</body></html>
